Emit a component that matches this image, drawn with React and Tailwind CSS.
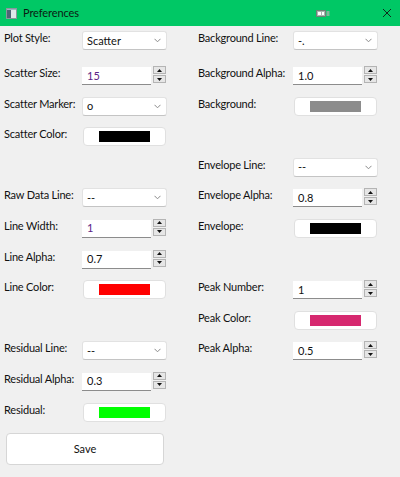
import React from 'react';

const font = { fontFamily: 'Lato, "Noto Sans", sans-serif' };

function Label({ children }) {
  return <div className="text-[11px] leading-[14px] tracking-[-0.2px] text-[#111] whitespace-nowrap">{children}</div>;
}

function Combo({ value }) {
  return (
    <div className="h-[19px] w-full bg-white border border-[#e2e2e2] border-b-[#c4c4c4] rounded-[3px] flex items-center justify-between pl-[4px] pr-[4px]">
      <span className="text-[11px] leading-[14px] text-[#111]">{value}</span>
      <svg width="7" height="5" viewBox="0 0 7 5" className="mr-[1px]">
        <polyline points="0.5,0.8 3.5,3.8 6.5,0.8" fill="none" stroke="#8a8a8a" strokeWidth="1" />
      </svg>
    </div>
  );
}

function SpinBtn({ up }) {
  return (
    <div className="h-[8px] w-full bg-[#e6e6e6] border border-[#b4b4b4] flex items-center justify-center">
      <svg width="5" height="3" viewBox="0 0 5 3">
        {up ? <polygon points="2.5,0 5,3 0,3" fill="#111" /> : <polygon points="0,0 5,0 2.5,3" fill="#111" />}
      </svg>
    </div>
  );
}

function Spin({ value, purple }) {
  return (
    <div className="flex items-start w-full">
      <div className={`mt-[1px] h-[18px] w-[69px] bg-white border-b border-[#8c8c8c] pl-[5px] flex items-center text-[11px] leading-[14px] ${purple ? 'text-[#5b2487]' : 'text-[#111]'}`}>
        {value}
      </div>
      <div className="ml-[2px] w-[13px] flex flex-col gap-[1px]">
        <SpinBtn up />
        <SpinBtn />
      </div>
    </div>
  );
}

function ColorBtn({ color }) {
  return (
    <div className="mx-[1px] h-[19px] bg-white border border-[#e0e0e0] rounded-[4px] flex items-center justify-center">
      <div className={`w-[51px] h-[11px] ${color}`} />
    </div>
  );
}

const rows = [
  ['Plot Style:', <Combo value="Scatter" />, 'Background Line:', <Combo value="-." />],
  ['Scatter Size:', <Spin value="15" purple />, 'Background Alpha:', <Spin value="1.0" />],
  ['Scatter Marker:', <Combo value="o" />, 'Background:', <ColorBtn color="bg-[#8c8c8c]" />],
  ['Scatter Color:', <ColorBtn color="bg-black" />, null, null],
  [null, null, 'Envelope Line:', <Combo value="--" />],
  ['Raw Data Line:', <Combo value="--" />, 'Envelope Alpha:', <Spin value="0.8" />],
  ['Line Width:', <Spin value="1" purple />, 'Envelope:', <ColorBtn color="bg-black" />],
  ['Line Alpha:', <Spin value="0.7" />, null, null],
  ['Line Color:', <ColorBtn color="bg-[#ff0000]" />, 'Peak Number:', <Spin value="1" />],
  [null, null, 'Peak Color:', <ColorBtn color="bg-[#d6286f]" />],
  ['Residual Line:', <Combo value="--" />, 'Peak Alpha:', <Spin value="0.5" />],
  ['Residual Alpha:', <Spin value="0.3" />, null, null],
  ['Residual:', <ColorBtn color="bg-[#00ff00]" />, null, null],
];

export default function App() {
  return (
    <div className="w-[400px] h-[477px] bg-[#f0f0f0] flex flex-col overflow-hidden" style={font}>
      {/* Title bar */}
      <div className="h-[26px] bg-[#00c865] flex items-center shrink-0">
        <svg width="11" height="11" viewBox="0 0 11 11" className="ml-[6px]">
          <rect x="0.5" y="0.5" width="10" height="10" fill="#e8eef0" stroke="#8a969c" />
          <rect x="1" y="2" width="4" height="8" fill="#4d6475" />
          <rect x="5" y="2" width="5" height="8" fill="#dfe7ea" />
          <rect x="1" y="1" width="9" height="1" fill="#9fb4c0" />
        </svg>
        <span className="ml-[6px] text-[11px] leading-[14px] tracking-[-0.1px] text-[#0b1a12]">Preferences</span>
        <div className="flex-1" />
        <svg width="14" height="7" viewBox="0 0 14 7" className="mr-[52px]">
          <rect x="0.5" y="0.5" width="9" height="6" fill="#a9b8b0" stroke="#6f7f77" />
          <rect x="2" y="2" width="3" height="3" fill="#ffffff" />
          <rect x="6" y="2" width="2" height="3" fill="#ffffff" />
          <rect x="10.5" y="1" width="3" height="5" fill="#7fb89a" />
        </svg>
        <svg width="10" height="10" viewBox="0 0 10 10" className="mr-[8px]">
          <path d="M1 1 L9 9 M9 1 L1 9" stroke="#0f2a1c" strokeWidth="1" />
        </svg>
      </div>

      {/* Form grid */}
      <div className="pt-[5px] pl-[4px] grid grid-cols-[78px_85px_31px_95px_85px] grid-rows-[35px_repeat(12,30.6px)] items-start">
        {rows.map(([l1, w1, l2, w2], i) => (
          <React.Fragment key={i}>
            <div>{l1 && <Label>{l1}</Label>}</div>
            <div>{w1}</div>
            <div />
            <div>{l2 && <Label>{l2}</Label>}</div>
            <div>{w2}</div>
          </React.Fragment>
        ))}
      </div>

      <div className="ml-[6px] w-[158px] h-[32px] bg-white border border-[#d6d6d6] rounded-[4px] flex items-center justify-center text-[11px] leading-[14px] text-[#111]">
        Save
      </div>
    </div>
  );
}
